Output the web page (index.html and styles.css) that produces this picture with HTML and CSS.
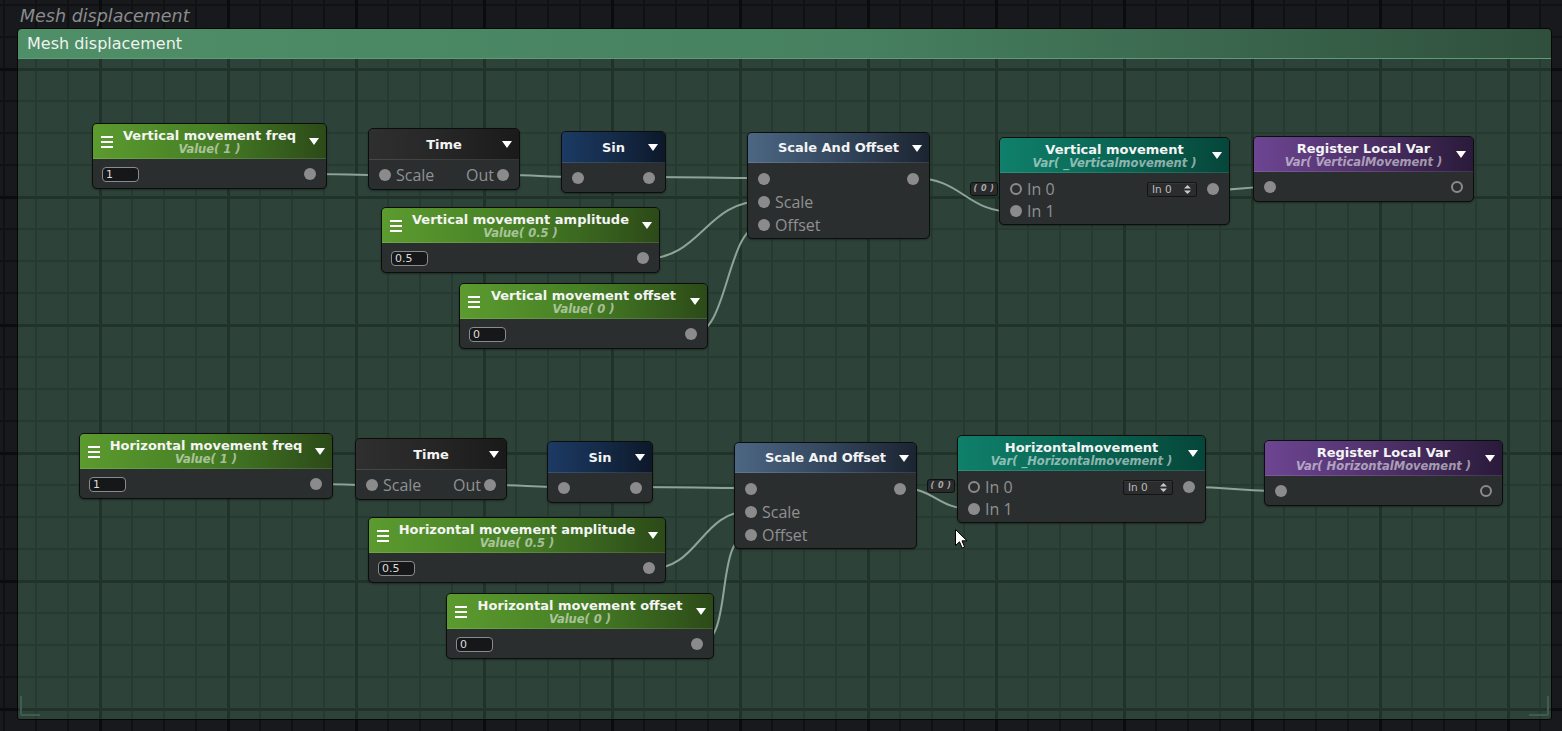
FILE: index.html
```html
<!DOCTYPE html>
<html>
<head>
<meta charset="utf-8">
<title>Mesh displacement</title>
<link rel="stylesheet" href="styles.css">
</head>
<body>
<div class="canvas">
  <div class="gtitle">Mesh displacement</div>
  <div class="group">
    <div class="ghead">Mesh displacement</div>
    <div class="gbody">
      <svg class="wires" width="1533" height="660" viewBox="0 0 1533 660">
        <g fill="none" stroke="#8fa498" stroke-width="2">
          <path d="M292 115 C322 115 337 116 367 116"/>
          <path d="M485 116 C515 116 529 118 559 118"/>
          <path d="M631 118 C689 118 688 119 746 119"/>
          <path d="M625 200 C685 200 686 142 746 142"/>
          <path d="M673 276 C712 276 707 165 746 165"/>
          <path d="M895 119 C946 119 946 153 997 153"/>
          <path d="M1195 131 C1223 131 1223 128 1251 128"/>

          <path d="M298 425 C326 425 326 426 354 426"/>
          <path d="M472 426 C509 426 509 428 546 428"/>
          <path d="M618 428 C676 428 676 429 733 429"/>
          <path d="M631 510 C682 510 682 452 733 452"/>
          <path d="M679 586 C718 586 694 475 733 475"/>
          <path d="M882 429 C918 429 918 450 955 450"/>
          <path d="M1171 428 C1216 428 1216 432 1262 432"/>
        </g>
      </svg>

      <!-- vertical chain -->
      <div class="node" style="left:74px;top:64px;width:235px">
        <div class="nh green"><span class="menu"></span><div class="tt"><div class="t">Vertical movement freq</div><div class="st">Value( 1 )</div></div><span class="dd"></span></div>
        <div class="nb"><div class="row"><span class="field">1</span><span class="sp"></span><span class="pin"></span></div></div>
      </div>

      <div class="node" style="left:350px;top:69px;width:152px">
        <div class="nh dark short"><span></span><div class="tt"><div class="t">Time</div></div><span class="dd"></span></div>
        <div class="nb"><div class="row"><span class="pin"></span><span class="lbl">Scale</span><span class="sp"></span><span class="lbl r">Out</span><span class="pin"></span></div></div>
      </div>

      <div class="node" style="left:543px;top:72px;width:105px">
        <div class="nh blue short"><span></span><div class="tt"><div class="t">Sin</div></div><span class="dd"></span></div>
        <div class="nb"><div class="row"><span class="pin"></span><span class="sp"></span><span class="pin"></span></div></div>
      </div>

      <div class="node" style="left:729px;top:73px;width:183px">
        <div class="nh steel short"><span></span><div class="tt"><div class="t">Scale And Offset</div></div><span class="dd"></span></div>
        <div class="nb tall"><div class="row r23"><span class="pin"></span><span class="sp"></span><span class="pin"></span></div><div class="row r23"><span class="pin"></span><span class="lbl">Scale</span></div><div class="row r23"><span class="pin"></span><span class="lbl">Offset</span></div></div>
      </div>

      <div class="badge" style="left:952px;top:123px">( 0 )</div>

      <div class="node" style="left:981px;top:78px;width:231px">
        <div class="nh teal"><span></span><div class="tt"><div class="t">Vertical movement</div><div class="st">Var( _Verticalmovement )</div></div><span class="dd"></span></div>
        <div class="nb vm"><div class="row r22"><span class="pin hollow"></span><span class="lbl">In 0</span><span class="sp"></span><span class="sel">In 0<svg width="7" height="9" viewBox="0 0 7 9"><path d="M3.5 0 L7 3.5 L0 3.5 Z M0 5.5 L7 5.5 L3.5 9 Z" fill="#c8c8c8"/></svg></span><span class="pin"></span></div><div class="row r22"><span class="pin"></span><span class="lbl">In 1</span></div></div>
      </div>

      <div class="node" style="left:1235px;top:77px;width:221px">
        <div class="nh purple"><span></span><div class="tt"><div class="t">Register Local Var</div><div class="st">Var( VerticalMovement )</div></div><span class="dd"></span></div>
        <div class="nb"><div class="row"><span class="pin"></span><span class="sp"></span><span class="pin hollow"></span></div></div>
      </div>

      <div class="node" style="left:363px;top:148px;width:279px">
        <div class="nh green"><span class="menu"></span><div class="tt"><div class="t">Vertical movement amplitude</div><div class="st">Value( 0.5 )</div></div><span class="dd"></span></div>
        <div class="nb"><div class="row"><span class="field">0.5</span><span class="sp"></span><span class="pin"></span></div></div>
      </div>

      <div class="node" style="left:441px;top:224px;width:249px">
        <div class="nh green"><span class="menu"></span><div class="tt"><div class="t">Vertical movement offset</div><div class="st">Value( 0 )</div></div><span class="dd"></span></div>
        <div class="nb"><div class="row"><span class="field">0</span><span class="sp"></span><span class="pin"></span></div></div>
      </div>

      <!-- horizontal chain -->
      <div class="node" style="left:61px;top:374px;width:254px">
        <div class="nh green"><span class="menu"></span><div class="tt"><div class="t">Horizontal movement freq</div><div class="st">Value( 1 )</div></div><span class="dd"></span></div>
        <div class="nb"><div class="row"><span class="field">1</span><span class="sp"></span><span class="pin"></span></div></div>
      </div>

      <div class="node" style="left:337px;top:379px;width:152px">
        <div class="nh dark short"><span></span><div class="tt"><div class="t">Time</div></div><span class="dd"></span></div>
        <div class="nb"><div class="row"><span class="pin"></span><span class="lbl">Scale</span><span class="sp"></span><span class="lbl r">Out</span><span class="pin"></span></div></div>
      </div>

      <div class="node" style="left:529px;top:382px;width:106px">
        <div class="nh blue short"><span></span><div class="tt"><div class="t">Sin</div></div><span class="dd"></span></div>
        <div class="nb"><div class="row"><span class="pin"></span><span class="sp"></span><span class="pin"></span></div></div>
      </div>

      <div class="node" style="left:716px;top:383px;width:183px">
        <div class="nh steel short"><span></span><div class="tt"><div class="t">Scale And Offset</div></div><span class="dd"></span></div>
        <div class="nb tall"><div class="row r23"><span class="pin"></span><span class="sp"></span><span class="pin"></span></div><div class="row r23"><span class="pin"></span><span class="lbl">Scale</span></div><div class="row r23"><span class="pin"></span><span class="lbl">Offset</span></div></div>
      </div>

      <div class="badge" style="left:909px;top:420px">( 0 )</div>

      <div class="node" style="left:939px;top:376px;width:249px">
        <div class="nh teal"><span></span><div class="tt"><div class="t">Horizontalmovement</div><div class="st">Var( _Horizontalmovement )</div></div><span class="dd"></span></div>
        <div class="nb vm"><div class="row r22"><span class="pin hollow"></span><span class="lbl">In 0</span><span class="sp"></span><span class="sel">In 0<svg width="7" height="9" viewBox="0 0 7 9"><path d="M3.5 0 L7 3.5 L0 3.5 Z M0 5.5 L7 5.5 L3.5 9 Z" fill="#c8c8c8"/></svg></span><span class="pin"></span></div><div class="row r22"><span class="pin"></span><span class="lbl">In 1</span></div></div>
      </div>

      <div class="node" style="left:1246px;top:381px;width:239px">
        <div class="nh purple"><span></span><div class="tt"><div class="t">Register Local Var</div><div class="st">Var( HorizontalMovement )</div></div><span class="dd"></span></div>
        <div class="nb"><div class="row"><span class="pin"></span><span class="sp"></span><span class="pin hollow"></span></div></div>
      </div>

      <div class="node" style="left:350px;top:458px;width:298px">
        <div class="nh green"><span class="menu"></span><div class="tt"><div class="t">Horizontal movement amplitude</div><div class="st">Value( 0.5 )</div></div><span class="dd"></span></div>
        <div class="nb"><div class="row"><span class="field">0.5</span><span class="sp"></span><span class="pin"></span></div></div>
      </div>

      <div class="node" style="left:428px;top:534px;width:268px">
        <div class="nh green"><span class="menu"></span><div class="tt"><div class="t">Horizontal movement offset</div><div class="st">Value( 0 )</div></div><span class="dd"></span></div>
        <div class="nb"><div class="row"><span class="field">0</span><span class="sp"></span><span class="pin"></span></div></div>
      </div>

      <svg class="cursor" width="13" height="20" viewBox="0 0 13 20"><path d="M0.5 0.5 L0.5 16.5 L4.5 12.8 L7.2 19 L9.6 18 L7 11.8 L12 11.8 Z" fill="#ffffff" stroke="#000000" stroke-width="1"/></svg>

      <div class="corner cl"></div>
      <div class="corner cr"></div>
    </div>
  </div>
</div>
</body>
</html>
```

FILE: styles.css
```css
html, body {
  margin: 0;
  padding: 0;
}

body {
  width: 1562px;
  height: 731px;
  overflow: hidden;
  font-family: "DejaVu Sans", sans-serif;
  background-color: #17191c;
  background-image:
    linear-gradient(to right, #0b0c0e 0 3px, transparent 3px),
    linear-gradient(to bottom, #0b0c0e 0 3px, transparent 3px),
    linear-gradient(to right, #0f1113 0 2px, transparent 2px),
    linear-gradient(to bottom, #0f1113 0 2px, transparent 2px);
  background-size: 128px 128px, 128px 128px, 32px 32px, 32px 32px;
  background-position: 99px 0, 0 68px, 3px 0, 0 4px;
  background-attachment: fixed;
}

.canvas {
  padding-left: 17px;
}

.gtitle {
  height: 28px;
  line-height: 32px;
  padding-left: 3px;
  font-size: 17.5px;
  font-style: italic;
  color: #8a8c8c;
  white-space: nowrap;
}

.group {
  position: relative;
  box-sizing: border-box;
  width: 1535px;
  height: 692px;
  border: 1px solid #050606;
  border-radius: 5px 5px 3px 3px;
  display: flex;
  flex-direction: column;
  overflow: hidden;
}

.ghead {
  height: 29px;
  line-height: 29px;
  padding-left: 9px;
  font-size: 16px;
  color: #eef3ee;
  background: linear-gradient(to right, #4f8f67, #468060 55%, #2f4f3c);
  border-bottom: 1px solid #5e9c74;
  white-space: nowrap;
}

.gbody {
  position: relative;
  flex: 1;
  background-color: #2d4239;
  background-image:
    linear-gradient(to right, #213329 0 3px, transparent 3px),
    linear-gradient(to bottom, #213329 0 3px, transparent 3px),
    linear-gradient(to right, #273a31 0 2px, transparent 2px),
    linear-gradient(to bottom, #273a31 0 2px, transparent 2px);
  background-size: 128px 128px, 128px 128px, 32px 32px, 32px 32px;
  background-position: 99px 0, 0 68px, 3px 0, 0 4px;
  background-attachment: fixed;
}

.wires {
  position: absolute;
  left: 0;
  top: 0;
}

.node {
  position: absolute;
  box-sizing: border-box;
  border: 1px solid #0c0d0d;
  border-radius: 5px;
  background: #2b2e2f;
  overflow: hidden;
  box-shadow: 0 1px 2px rgba(0, 0, 0, 0.35);
}

.nh {
  display: grid;
  grid-template-columns: 24px 1fr 24px;
  align-items: center;
  height: 35px;
  box-shadow: inset 0 -1px 0 rgba(255, 255, 255, 0.12);
}

.nh.short {
  height: 31px;
}

.green { background: linear-gradient(to right, #5c9b2f, #467f25 50%, #2c4a18); }
.dark { background: linear-gradient(to right, #2f2f2f, #262626 50%, #1a1a1a); }
.blue { background: linear-gradient(to right, #1c3a63, #152b49 50%, #0d1829); }
.steel { background: linear-gradient(to right, #4c6683, #34475e 50%, #1b2431); }
.teal { background: linear-gradient(to right, #0f806a, #0a6654 50%, #06463a); }
.purple { background: linear-gradient(to right, #6d4592, #4e3169 50%, #2a1a3a); }

.steel.short { height: 30px; }

.menu {
  display: block;
  width: 12px;
  height: 2px;
  margin-left: 8px;
  background: #ffffff;
  box-shadow: 0 -5px 0 #ffffff, 0 5px 0 #ffffff;
}

.dd {
  justify-self: end;
  margin-right: 7px;
  width: 0;
  height: 0;
  border-left: 5.5px solid transparent;
  border-right: 5.5px solid transparent;
  border-top: 7px solid #ffffff;
}

.tt {
  text-align: center;
  white-space: nowrap;
}

.t {
  font-size: 13px;
  font-weight: bold;
  line-height: 14px;
  color: #f4f4f4;
}

.st {
  font-size: 11.5px;
  font-weight: bold;
  font-style: italic;
  line-height: 12px;
  color: rgba(255, 255, 255, 0.55);
}

.nb {
  padding: 1px 10px 0;
}

.nb.tall {
  padding-top: 4px;
  padding-bottom: 2px;
}

.nb.vm {
  padding-top: 5px;
  padding-bottom: 2px;
}

.row {
  display: flex;
  align-items: center;
  height: 28px;
}

.row.r23 { height: 23px; }
.row.r22 { height: 22px; }

.sp { flex: 1; }

.pin {
  box-sizing: border-box;
  width: 12px;
  height: 12px;
  border-radius: 50%;
  background: #8b8b8b;
  flex: none;
}

.pin.hollow {
  background: transparent;
  border: 2px solid #8b8b8b;
}

.lbl {
  font-family: "Open Sans", "DejaVu Sans", sans-serif;
  font-size: 16px;
  color: #8f9191;
  margin-left: 5px;
  line-height: 18px;
}

.lbl.r {
  margin-left: 0;
  margin-right: 3px;
}

.field {
  box-sizing: border-box;
  width: 37px;
  height: 15px;
  border: 1px solid #8a8c8c;
  border-radius: 4px;
  background: #161718;
  padding-left: 3px;
  font-size: 11px;
  line-height: 13px;
  color: #dcdcdc;
  margin-left: -1px;
}

.sel {
  box-sizing: border-box;
  display: flex;
  align-items: center;
  justify-content: space-between;
  width: 50px;
  height: 15px;
  padding: 0 5px 0 4px;
  margin-right: 10px;
  border: 1px solid #131414;
  border-radius: 2px;
  background: #2a2c2d;
  box-shadow: inset 0 1px 0 rgba(255, 255, 255, 0.06);
  font-size: 10.5px;
  color: #bdbdbd;
}

.badge {
  position: absolute;
  box-sizing: border-box;
  width: 28px;
  height: 14px;
  border: 1px solid #101111;
  border-radius: 3px;
  background: #282a2b;
  font-size: 8px;
  font-weight: bold;
  font-style: italic;
  line-height: 12px;
  text-align: center;
  letter-spacing: 0.5px;
  color: #a8a8a8;
  white-space: pre;
}

.cursor {
  position: absolute;
  left: 937px;
  top: 470px;
}

.corner {
  position: absolute;
  bottom: 3px;
  width: 18px;
  height: 18px;
}

.cl {
  left: 2px;
  border-left: 2px solid #3f5c4e;
  border-bottom: 2px solid #3f5c4e;
  border-bottom-left-radius: 2px;
}

.cr {
  right: 2px;
  border-right: 2px solid #3f5c4e;
  border-bottom: 2px solid #3f5c4e;
  border-bottom-right-radius: 2px;
}
```
